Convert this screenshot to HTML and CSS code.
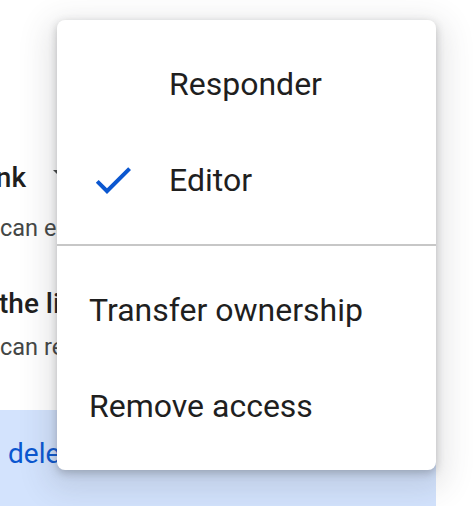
FILE: index.html
```html
<!DOCTYPE html>
<html lang="en">
<head>
<meta charset="utf-8">
<title>Access menu</title>
<link rel="stylesheet" href="styles.css">
</head>
<body>
<div class="page">
  <div class="dialog">
    <div class="row title">
      <div class="clip"><span>Anyone with the link</span></div>
      <svg class="caret" width="20" height="10" viewBox="0 0 20 10"><path d="M0 0 L10 10 L20 0 Z" fill="#444746"/></svg>
    </div>
    <div class="row sub first-sub">can edit</div>
    <div class="row title second">the link</div>
    <div class="row sub second-sub">can read</div>
    <div class="band"><span class="band-text">delete</span></div>
  </div>

  <div class="menu" role="menu">
    <div class="item"><span class="slot"></span><span class="label">Responder</span></div>
    <div class="item selected">
      <span class="slot">
        <svg width="48" height="48" viewBox="0 0 24 24"><path d="M9 16.17L4.83 12l-1.42 1.41L9 19 21 7l-1.41-1.41z" fill="#0b57d0"/></svg>
      </span>
      <span class="label">Editor</span>
    </div>
    <div class="divider"></div>
    <div class="item plain"><span class="label">Transfer ownership</span></div>
    <div class="item plain"><span class="label">Remove access</span></div>
  </div>
</div>
</body>
</html>
```

FILE: styles.css
```css
html, body {
  margin: 0;
  padding: 0;
  background: #ffffff;
}

body {
  width: 476px;
  height: 506px;
  overflow: hidden;
  font-family: Roboto, "Liberation Sans", Arial, sans-serif;
}

.page {
  position: relative;
  width: 476px;
  height: 506px;
  overflow: hidden;
}

.dialog {
  padding-top: 162px;
}

.row {
  white-space: nowrap;
  line-height: 32px;
  height: 32px;
}

.title {
  display: flex;
  align-items: center;
  font-size: 28px;
  font-weight: 500;
  color: #1f1f1f;
}

.clip {
  width: 26px;
  display: flex;
  justify-content: flex-end;
}

.caret {
  margin-left: 27px;
  margin-top: -6px;
}

.sub {
  font-size: 23.5px;
  color: #444746;
}

.first-sub {
  margin-top: 18px;
}

.second {
  margin-top: 44px;
  text-indent: -1px;
}

.second-sub {
  margin-top: 11px;
}

.band {
  margin-top: 47px;
  margin-right: 40px;
  height: 120px;
  background: #d3e3fd;
  padding-left: 8px;
  padding-top: 28px;
  box-sizing: border-box;
}

.band-text {
  font-size: 28px;
  line-height: 32px;
  color: #0b57d0;
}

.menu {
  position: absolute;
  left: 57px;
  top: 20px;
  width: 379px;
  padding: 16px 0;
  background: #ffffff;
  border-radius: 8px;
  box-shadow: 0 3px 8px rgba(60, 64, 67, 0.3), 0 10px 30px 10px rgba(60, 64, 67, 0.13);
}

.item {
  height: 96px;
  display: flex;
  align-items: center;
  gap: 32px;
  padding-left: 32px;
  font-size: 32px;
  color: #1f1f1f;
}

.slot {
  width: 48px;
  height: 48px;
  display: flex;
}

.divider {
  height: 2px;
  background: #c7c7c7;
  margin: 16px 0;
}
```
